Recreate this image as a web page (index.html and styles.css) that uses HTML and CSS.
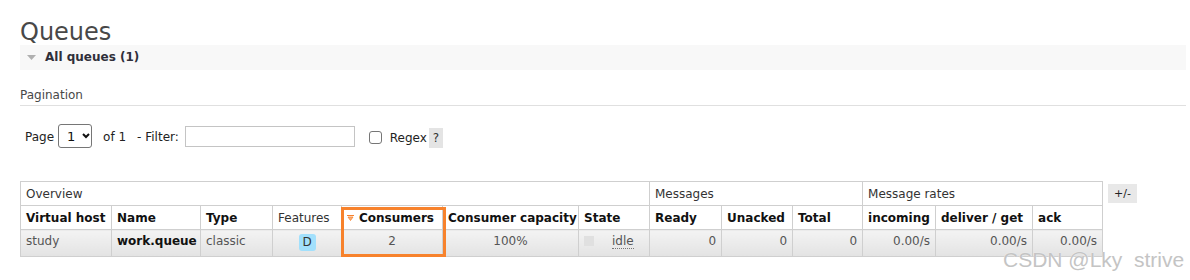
FILE: index.html
```html
<!DOCTYPE html>
<html lang="en">
<head>
<meta charset="utf-8">
<title>Queues</title>
<link rel="stylesheet" href="styles.css">
</head>
<body>
<div class="main">
  <h1 class="title">Queues</h1>
  <div class="section-head">
    <svg class="tri" width="9" height="5" viewBox="0 0 9 5"><path d="M0 0 H9 L4.5 5 Z" fill="#b0b0b0"/></svg>
    <span class="section-label">All queues (1)</span>
  </div>

  <h3 class="sub">Pagination</h3>
  <div class="pager">
    <span class="lbl">Page</span>
    <span class="select"><span class="sel-val">1</span><svg width="8" height="6" viewBox="0 0 8 6"><path d="M1 1 L4 4 L7 1" fill="none" stroke="#111" stroke-width="2"/></svg></span>
    <span class="lbl of">of 1</span>
    <span class="lbl filter">- Filter:</span>
    <input class="filter-input" type="text">
    <input class="check" type="checkbox">
    <span class="lbl regex">Regex</span>
    <span class="help">?</span>
  </div>

  <div class="table-wrap">
    <table class="list">
      <colgroup>
        <col style="width:91px"><col style="width:89px"><col style="width:72px"><col style="width:69px"><col style="width:101px"><col style="width:136px"><col style="width:71px"><col style="width:72px"><col style="width:71px"><col style="width:70px"><col style="width:73px"><col style="width:97px"><col style="width:70px">
      </colgroup>
      <thead>
        <tr class="group">
          <th colspan="7">Overview</th>
          <th colspan="3">Messages</th>
          <th colspan="3">Message rates</th>
        </tr>
        <tr class="cols">
          <th>Virtual host</th>
          <th>Name</th>
          <th>Type</th>
          <th class="plain">Features</th>
          <th><svg class="sort" width="7" height="6" viewBox="0 0 7 6"><path d="M0 0.5 H7" stroke="#f7822c" stroke-width="1"/><path d="M1 2 H6 L3.5 5.5 Z" fill="#fbb27a" stroke="#f7822c" stroke-width="0.8"/></svg>Consumers</th>
          <th>Consumer capacity</th>
          <th>State</th>
          <th>Ready</th>
          <th>Unacked</th>
          <th>Total</th>
          <th>incoming</th>
          <th>deliver / get</th>
          <th>ack</th>
        </tr>
      </thead>
      <tbody>
        <tr>
          <td>study</td>
          <td class="name">work.queue</td>
          <td>classic</td>
          <td class="c feat"><abbr class="badge">D</abbr></td>
          <td class="c">2</td>
          <td class="c">100%</td>
          <td><span class="state-sq"></span><abbr class="state">idle</abbr></td>
          <td class="r">0</td>
          <td class="r">0</td>
          <td class="r">0</td>
          <td class="r">0.00/s</td>
          <td class="r">0.00/s</td>
          <td class="r">0.00/s</td>
        </tr>
      </tbody>
    </table>
    <span class="toggle">+/-</span>
    <div class="highlight"></div>
  </div>
</div>
<div class="watermark">CSDN @Lky&nbsp; strive</div>
</body>
</html>
```
FILE: styles.css
```css
html, body {
  margin: 0;
  padding: 0;
  background: #fff;
}
body {
  position: relative;
  font-family: "DejaVu Sans", Verdana, sans-serif;
  font-size: 12px;
  line-height: 15px;
  color: #484848;
  height: 280px;
  overflow: hidden;
}
.main {
  padding: 0 4px 0 20px;
}
.title {
  margin: 20px 0 0;
  font-size: 24px;
  line-height: 25px;
  font-weight: normal;
  color: #484848;
}
.section-head {
  height: 25px;
  background: #f8f8f8;
  display: flex;
  align-items: center;
  padding-left: 7px;
}
.tri {
  margin-right: 9px;
}
.section-label {
  font-weight: bold;
  color: #2f2f3a;
}
.sub {
  margin: 18px 0 0;
  font-size: 12px;
  font-weight: normal;
  line-height: 15px;
  padding-bottom: 2px;
  border-bottom: 1px solid #e0e0e0;
  color: #484848;
}
.pager {
  margin-top: 18px;
  height: 24px;
  display: flex;
  align-items: center;
  padding-left: 5px;
  color: #222;
}
.lbl {
  margin-top: 2px;
}
.select {
  box-sizing: border-box;
  width: 34px;
  height: 24px;
  margin-left: 4px;
  border: 1px solid #767676;
  border-radius: 3px;
  display: flex;
  align-items: center;
  padding-left: 8px;
  gap: 7px;
  color: #111;
  font-size: 13px;
}
.of {
  margin-left: 11px;
}
.filter {
  margin-left: 11px;
}
.filter-input {
  box-sizing: border-box;
  width: 170px;
  height: 21px;
  margin: 0 0 0 6px;
  border: 1px solid #c4c4c4;
  padding: 0;
}
.check {
  appearance: none;
  box-sizing: border-box;
  width: 13px;
  height: 13px;
  margin: 2px 0 0 14px;
  border: 1px solid #767676;
  border-radius: 3px;
  background: #fff;
}
.regex {
  margin-left: 8px;
  margin-top: 4px;
}
.help {
  margin-left: 2px;
  width: 14px;
  height: 20px;
  line-height: 20px;
  text-align: center;
  background: #e4e4e4;
  color: #333;
  margin-top: 4px;
}
.table-wrap {
  position: relative;
  margin-top: 33px;
  display: flex;
  align-items: flex-start;
}
.list {
  border-collapse: collapse;
  table-layout: fixed;
  width: 1083px;
}
.list th,
.list td {
  border: 1px solid #cfcfcf;
  padding: 5px 5px 3px;
  line-height: 15px;
  text-align: left;
  white-space: nowrap;
  overflow: hidden;
}
.list th {
  font-weight: bold;
  color: #111;
  background: #fff;
}
.list .group th {
  font-weight: normal;
  color: #333;
}
.list th.plain {
  font-weight: normal;
  color: #333;
}
.sort {
  margin-right: 5px;
  vertical-align: 1px;
}
.list td {
  padding: 4px 5px 7px;
  vertical-align: top;
  color: #555;
  background: linear-gradient(#f3f3f3, #e3e3e3);
}
.list td.name {
  font-weight: bold;
  color: #111;
}
.list td.c {
  text-align: center;
}
.list td.r {
  text-align: right;
}
.list td.feat {
  padding: 4px 5px 5px;
}
.badge {
  display: inline-block;
  vertical-align: top;
  width: 17px;
  height: 17px;
  line-height: 17px;
  border-radius: 3px;
  background: #a2e0fc;
  color: #333;
  text-decoration: none;
  text-align: center;
}
.state-sq {
  display: inline-block;
  vertical-align: top;
  width: 10px;
  height: 10px;
  margin-top: 2px;
  margin-right: 18px;
  background: #e0e0e0;
}
.state {
  text-decoration: none;
  border-bottom: 1px dotted #777;
}
.toggle {
  margin: 3px 0 0 5px;
  width: 29px;
  height: 19px;
  line-height: 19px;
  text-align: center;
  background: #e8e8e8;
  color: #222;
  font-size: 11px;
}
.highlight {
  position: absolute;
  left: 321px;
  top: 26px;
  width: 105px;
  height: 50px;
  box-sizing: border-box;
  border: 3px solid #f7822c;
  pointer-events: none;
}
.watermark {
  position: absolute;
  left: 1003px;
  top: 248px;
  font-family: "Liberation Sans", Arial, sans-serif;
  font-size: 21px;
  line-height: 24px;
  color: #c4c4c4;
  text-shadow: 0 0 1px #fff;
  white-space: nowrap;
}
```
